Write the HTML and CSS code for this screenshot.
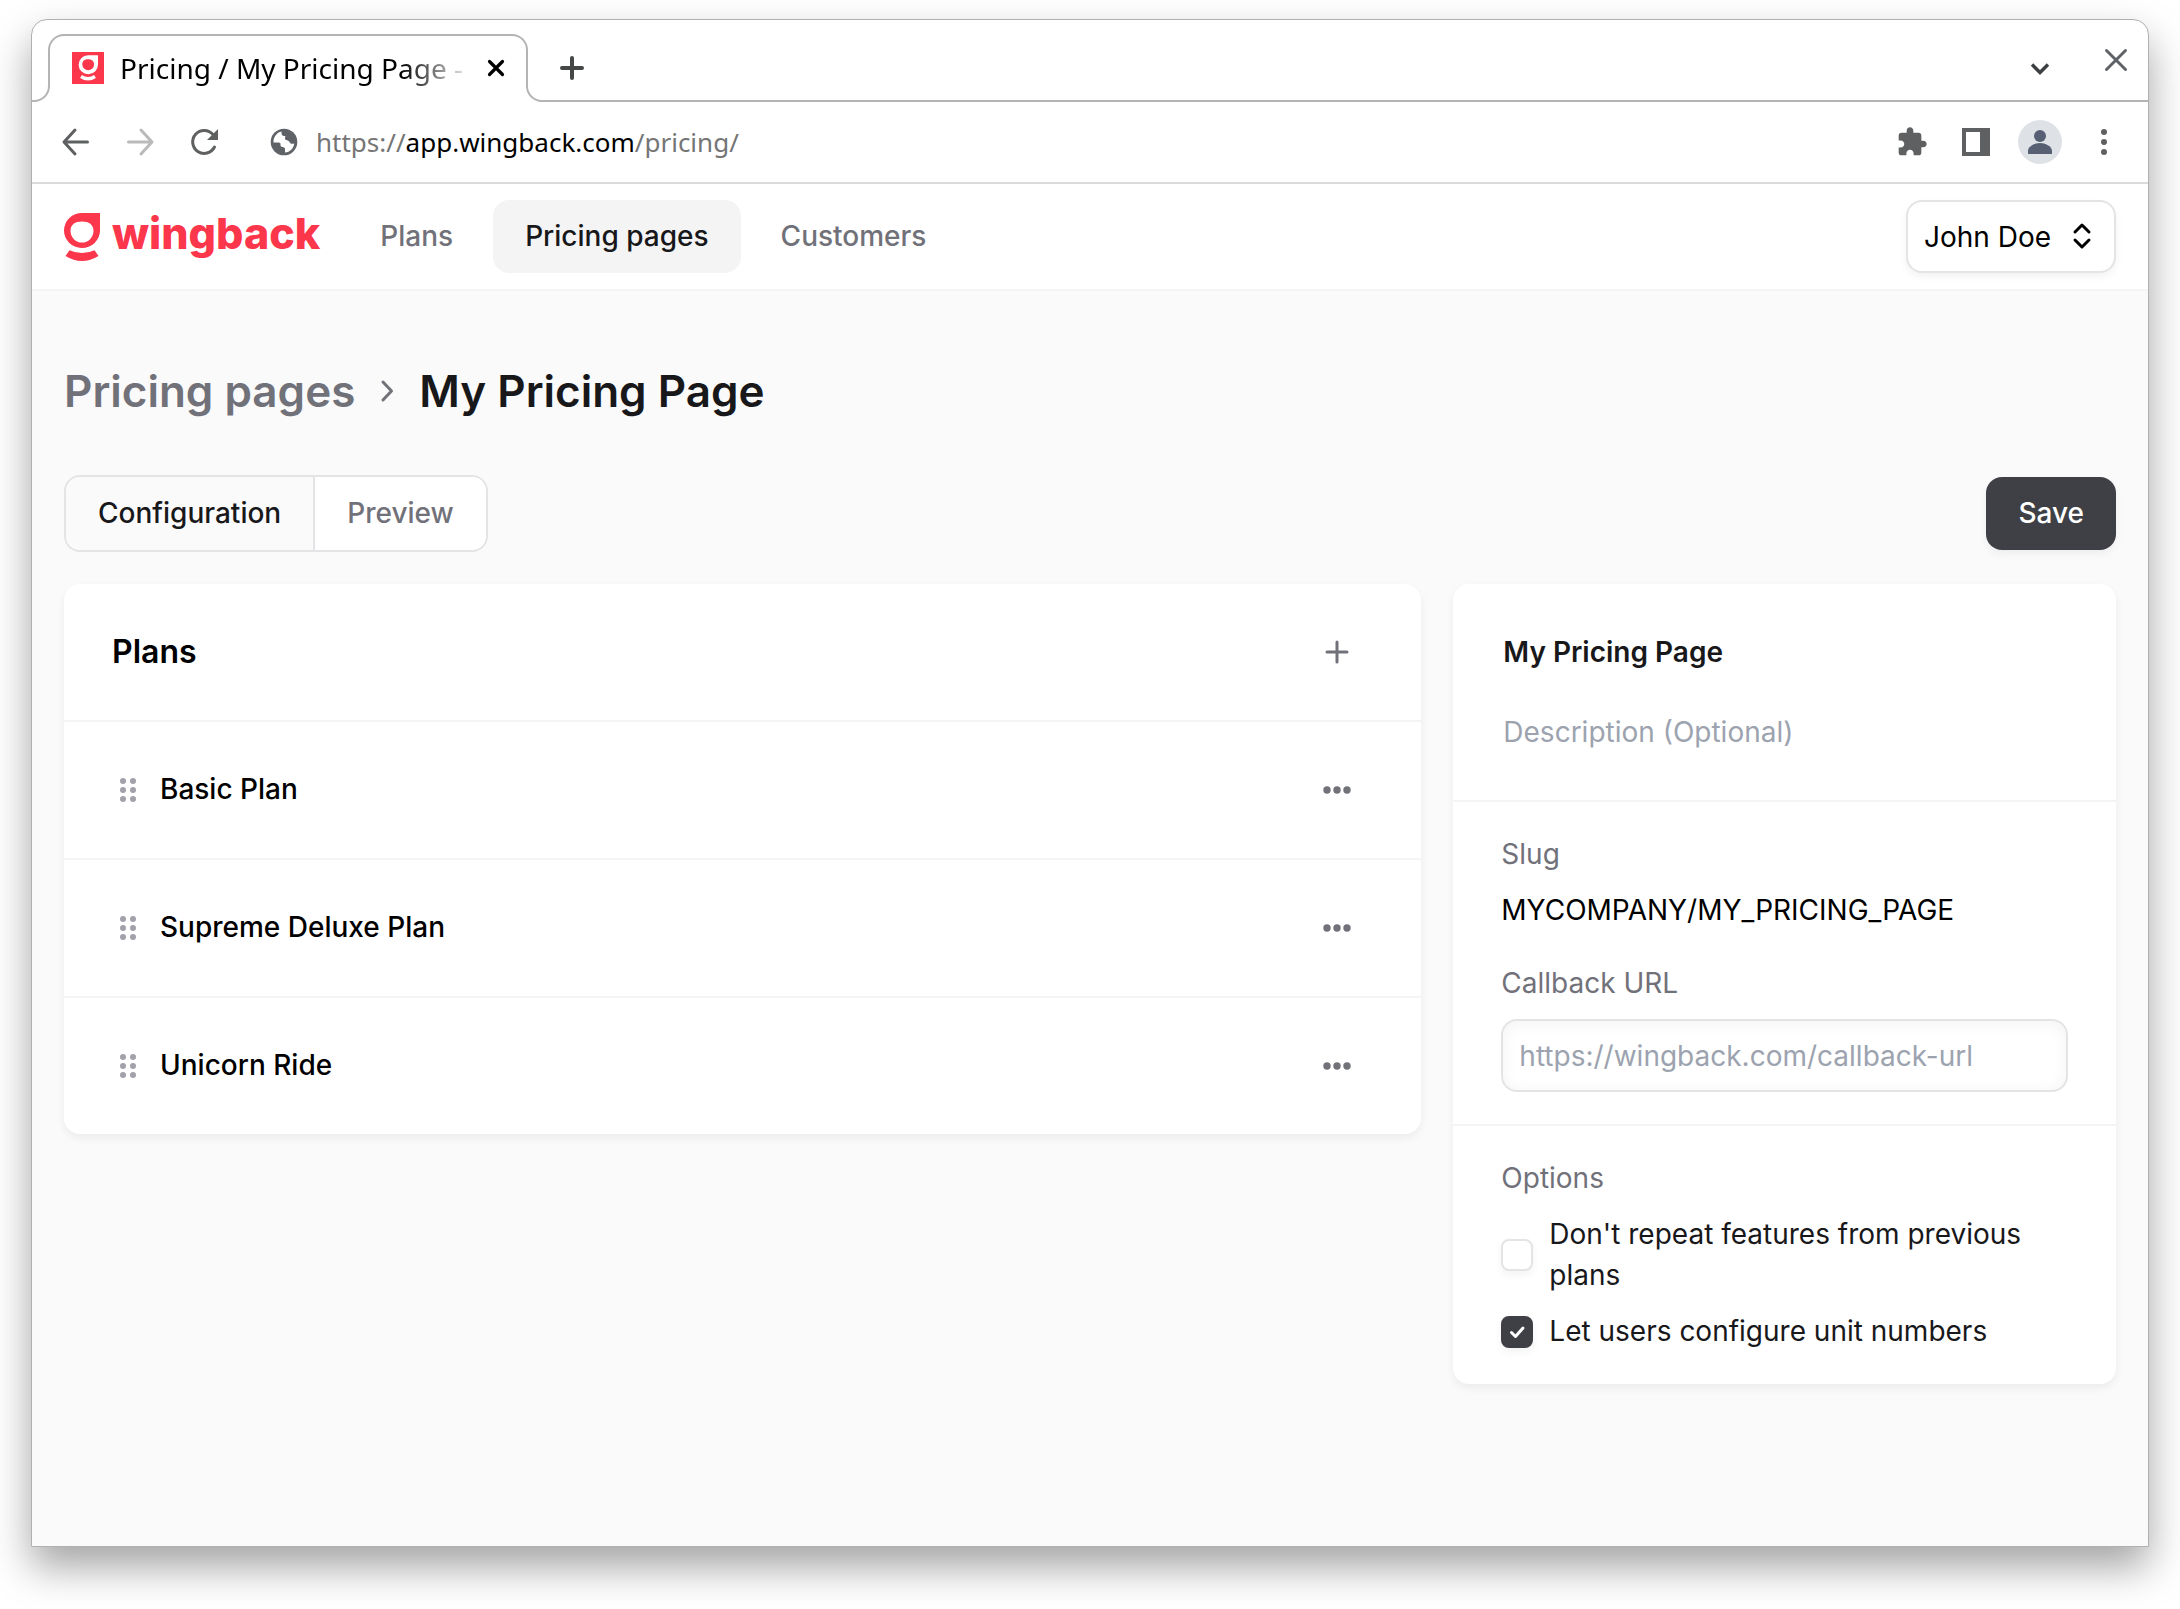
FILE: index.html
```html
<!DOCTYPE html>
<html lang="en">
<head>
    <meta charset="UTF-8">
    <meta name="viewport" content="width=device-width, initial-scale=1.0">
    <title>Pricing / My Pricing Page - Wingback</title>
    <link rel="stylesheet" href="styles.css">
</head>
<body>
    <div class="window">
        <!-- Tab strip -->
        <div class="tab-strip">
            <div class="tab-foot tab-foot-left"></div>
            <div class="browser-tab">
                <svg class="favicon" viewBox="0 0 32 32" width="32" height="32">
                    <rect width="32" height="32" fill="#fc364b"/>
                    <path fill="#fff" fill-rule="evenodd" d="M16 3.200H26V12.500A9.700 9.500 0 1 1 16 3.200ZM16 7.200C12.500 7.200 10.300 9 10.300 12.300A5.900 5.900 0 0 0 22.100 12.300C22.100 9 19.500 7.200 16 7.200Z"/>
                    <path d="M9 24.500q7 4.500 14 0" fill="none" stroke="#fff" stroke-width="3.400"/>
                </svg>
                <span class="tab-title">Pricing / My Pricing Page -</span>
                <button class="icon-button tab-close" aria-label="Close tab">
                    <svg viewBox="0 0 32 32" width="32" height="32"><path d="M9.500 9.500l13 13M22.500 9.500l-13 13" fill="none" stroke="#000" stroke-width="3.200" stroke-linecap="round"/></svg>
                </button>
            </div>
            <div class="tab-foot tab-foot-right"></div>
            <div class="tab-rest">
                <button class="icon-button" aria-label="New tab">
                    <svg viewBox="0 0 32 32" width="32" height="32"><path d="M16 6v20M6 16h20" fill="none" stroke="#444746" stroke-width="4" stroke-linecap="round"/></svg>
                </button>
                <div class="window-buttons">
                    <button class="icon-button" aria-label="Search tabs">
                        <svg viewBox="0 0 32 32" width="32" height="32"><path d="M8 12.500l8 8 8-8" fill="none" stroke="#3c4043" stroke-width="3.400"/></svg>
                    </button>
                    <button class="icon-button window-close" aria-label="Close window">
                        <svg viewBox="0 0 32 32" width="32" height="32"><path d="M6.500 6.500l19 19M25.500 6.500l-19 19" fill="none" stroke="#5f6368" stroke-width="3" stroke-linecap="round"/></svg>
                    </button>
                </div>
            </div>
        </div>

        <!-- Address bar -->
        <div class="toolbar">
            <div class="toolbar-group">
                <button class="icon-button" aria-label="Back">
                    <svg viewBox="0 0 40 40" width="40" height="40"><path d="M31.500 20H9M19 8L8 20l11 12" fill="none" stroke="#5f6061" stroke-width="3" stroke-linecap="round" stroke-linejoin="round"/></svg>
                </button>
                <button class="icon-button" aria-label="Forward">
                    <svg viewBox="0 0 40 40" width="40" height="40"><path d="M8.500 20H31M21 8l11 12-11 12" fill="none" stroke="#bababa" stroke-width="3" stroke-linecap="round" stroke-linejoin="round"/></svg>
                </button>
                <button class="icon-button" aria-label="Reload">
                    <svg viewBox="0 0 40 40" width="40" height="40">
                        <path d="M30.500 25a11.500 11.500 0 1 1-1.500-12.500" fill="none" stroke="#5f6061" stroke-width="3" stroke-linecap="round"/>
                        <path d="M34 7v11H23z" fill="#5f6061"/>
                    </svg>
                </button>
            </div>
            <div class="address">
                <svg viewBox="0 0 32 32" width="32" height="32">
                    <circle cx="16" cy="16" r="13.300" fill="#5f6368"/>
                    <path fill="#fff" d="M5.500 15C6 10 9.500 6.400 13.500 5.600C13.500 8 13.500 9.500 15.500 10H17C18 10.500 16.500 11.500 17 13C17.500 14.500 20.500 14 21.500 16C22.500 18 24 18 26.300 17.500C25.500 22.500 22 26.200 17 26.600V22.500C16.500 20.500 12.500 22 12.500 19V17.500C12 16.500 11 16.400 10 16.400H5.500Z"/>
                </svg>
                <span class="url">https://<span class="url-host">app.wingback.com</span>/pricing/</span>
            </div>
            <div class="toolbar-group">
                <button class="icon-button" aria-label="Extensions">
                    <svg viewBox="0 0 24 24" width="32" height="32"><path fill="#5f6061" d="M20.500 11H19V7c0-1.100-.9-2-2-2h-4V3.500C13 2.120 11.880 1 10.500 1S8 2.120 8 3.500V5H4c-1.100 0-1.990.9-1.990 2v3.800H3.500c1.490 0 2.700 1.210 2.700 2.700s-1.210 2.700-2.700 2.700H2V20c0 1.100.9 2 2 2h3.800v-1.500c0-1.490 1.210-2.700 2.700-2.700 1.490 0 2.700 1.210 2.700 2.700V22H17c1.100 0 2-.9 2-2v-4h1.500c1.380 0 2.500-1.120 2.500-2.500S21.880 11 20.500 11z"/></svg>
                </button>
                <button class="icon-button" aria-label="Side panel">
                    <svg viewBox="0 0 28 28" width="28" height="28"><path fill="#5f6061" fill-rule="evenodd" d="M0 0h28v28H0zM4 4v20h14V4z"/></svg>
                </button>
                <button class="icon-button" aria-label="Profile">
                    <svg viewBox="0 0 44 44" width="44" height="44">
                        <circle cx="22" cy="22" r="22" fill="#dee1e6"/>
                        <circle cx="22" cy="16" r="6" fill="#565f73"/>
                        <path d="M10 34v-3c0-5 7-8 12-8s12 3 12 8v3z" fill="#565f73"/>
                    </svg>
                </button>
                <button class="icon-button" aria-label="Menu">
                    <svg viewBox="0 0 32 32" width="32" height="32" fill="#5f6061"><circle cx="16" cy="6" r="3"/><circle cx="16" cy="16" r="3"/><circle cx="16" cy="26" r="3"/></svg>
                </button>
            </div>
        </div>

        <header class="header">
            <a class="logo" href="#">
                <svg viewBox="0 0 36 48" width="36" height="48">
                    <path fill="#fc364b" fill-rule="evenodd" d="M18 0H36V18A18 17.500 0 1 1 18 0ZM18 8.500C11 8.500 6.500 11.500 6.500 18A11.500 11.500 0 0 0 29.500 18C29.500 11.500 25 8.500 18 8.500Z"/>
                    <path fill="#fc364b" d="M5.500 37.200Q18 43 30.500 37.200L34.500 43Q18 53 1.500 43Z"/>
                </svg>
                <span class="logo-text">wingback</span>
            </a>
            <nav class="nav">
                <a class="nav-link" href="#">Plans</a>
                <a class="nav-link active" href="#">Pricing pages</a>
                <a class="nav-link" href="#">Customers</a>
            </nav>
            <div class="user-menu">
                <select class="user-select" aria-label="Account">
                    <option>John Doe</option>
                </select>
                <svg class="user-arrows" viewBox="0 0 24 32" width="24" height="32"><path d="M5 12l7-7 7 7M5 20l7 7 7-7" fill="none" stroke="#000" stroke-width="3" stroke-linecap="round" stroke-linejoin="round"/></svg>
            </div>
        </header>

        <main class="main">
            <h1 class="breadcrumb">
                <a class="breadcrumb-link" href="#">Pricing pages</a>
                <svg viewBox="0 0 32 32" width="32" height="32"><path d="M12 7l8.500 9L12 25" fill="none" stroke="#71717a" stroke-width="3" stroke-linecap="round" stroke-linejoin="round"/></svg>
                <span>My Pricing Page</span>
            </h1>

            <div class="actions">
                <div class="view-tabs">
                    <button class="view-tab active">Configuration</button>
                    <button class="view-tab">Preview</button>
                </div>
                <button class="save-button">Save</button>
            </div>

            <div class="columns">
                <section class="card plans">
                    <div class="plan-row">
                        <h2 class="plans-title">Plans</h2>
                        <button class="icon-button" aria-label="Add plan">
                            <svg viewBox="0 0 32 32" width="32" height="32"><path d="M16 6v20M6 16h20" fill="none" stroke="#71717a" stroke-width="3" stroke-linecap="round"/></svg>
                        </button>
                    </div>
                    <div class="plan-row">
                        <svg class="drag" viewBox="0 0 32 32" width="32" height="32" fill="#a1a1aa"><circle cx="11" cy="7" r="3"/><circle cx="21" cy="7" r="3"/><circle cx="11" cy="16" r="3"/><circle cx="21" cy="16" r="3"/><circle cx="11" cy="25" r="3"/><circle cx="21" cy="25" r="3"/></svg>
                        <span class="plan-name">Basic Plan</span>
                        <button class="icon-button" aria-label="Basic Plan options">
                            <svg viewBox="0 0 32 32" width="32" height="32" fill="#71717a"><circle cx="6" cy="16" r="3.700"/><circle cx="16" cy="16" r="3.700"/><circle cx="26" cy="16" r="3.700"/></svg>
                        </button>
                    </div>
                    <div class="plan-row">
                        <svg class="drag" viewBox="0 0 32 32" width="32" height="32" fill="#a1a1aa"><circle cx="11" cy="7" r="3"/><circle cx="21" cy="7" r="3"/><circle cx="11" cy="16" r="3"/><circle cx="21" cy="16" r="3"/><circle cx="11" cy="25" r="3"/><circle cx="21" cy="25" r="3"/></svg>
                        <span class="plan-name">Supreme Deluxe Plan</span>
                        <button class="icon-button" aria-label="Supreme Deluxe Plan options">
                            <svg viewBox="0 0 32 32" width="32" height="32" fill="#71717a"><circle cx="6" cy="16" r="3.700"/><circle cx="16" cy="16" r="3.700"/><circle cx="26" cy="16" r="3.700"/></svg>
                        </button>
                    </div>
                    <div class="plan-row">
                        <svg class="drag" viewBox="0 0 32 32" width="32" height="32" fill="#a1a1aa"><circle cx="11" cy="7" r="3"/><circle cx="21" cy="7" r="3"/><circle cx="11" cy="16" r="3"/><circle cx="21" cy="16" r="3"/><circle cx="11" cy="25" r="3"/><circle cx="21" cy="25" r="3"/></svg>
                        <span class="plan-name">Unicorn Ride</span>
                        <button class="icon-button" aria-label="Unicorn Ride options">
                            <svg viewBox="0 0 32 32" width="32" height="32" fill="#71717a"><circle cx="6" cy="16" r="3.700"/><circle cx="16" cy="16" r="3.700"/><circle cx="26" cy="16" r="3.700"/></svg>
                        </button>
                    </div>
                </section>

                <form class="card settings">
                    <div class="section names">
                        <input class="plain-input name-input" type="text" aria-label="Name" value="My Pricing Page">
                        <input class="plain-input" type="text" aria-label="Description" placeholder="Description (Optional)">
                    </div>
                    <div class="section">
                        <div class="field">
                            <span class="label">Slug</span>
                            <span class="slug">MYCOMPANY/MY_PRICING_PAGE</span>
                        </div>
                        <div class="field">
                            <label class="label" for="callback">Callback URL</label>
                            <input class="text-input" type="url" id="callback" placeholder="https://wingback.com/callback-url">
                        </div>
                    </div>
                    <div class="section">
                        <div class="field">
                            <span class="label">Options</span>
                            <label class="option">
                                <input class="checkbox" type="checkbox">
                                <span>Don't repeat features from previous plans</span>
                            </label>
                            <label class="option">
                                <input class="checkbox" type="checkbox" checked>
                                <span>Let users configure unit numbers</span>
                            </label>
                        </div>
                    </div>
                </form>
            </div>
        </main>
    </div>
</body>
</html>
```
FILE: styles.css
```css
* {
    box-sizing: border-box;
}
body {
    margin: 0;
    min-height: 100vh;
    padding: 19px 31px 62px;
    display: flex;
    background-color: #fff;
    font-family: Inter, sans-serif;
    font-size: 28px;
    line-height: 41px;
    color: #18181b;
}
button, input, select {
    font: inherit;
    color: inherit;
}
button {
    cursor: pointer;
}
a {
    text-decoration: none;
}
svg {
    display: block;
    flex-shrink: 0;
}
.window {
    flex: 1;
    display: flex;
    flex-direction: column;
    overflow: hidden;
    background-color: #fff;
    border: 1px solid #b0b0b0;
    border-radius: 16px 16px 0 0;
    box-shadow: 0 20px 40px rgba(0, 0, 0, 0.36);
}
.icon-button {
    display: flex;
    align-items: center;
    justify-content: center;
    width: 32px;
    height: 32px;
    padding: 0;
    border: none;
    background: none;
}

/* Browser chrome */
.tab-strip {
    display: flex;
    height: 82px;
    font-family: "Noto Sans", sans-serif;
    color: #000;
}
.tab-foot {
    align-self: flex-end;
    width: 18px;
    height: 18px;
    border-bottom: 2px solid #b4b4b4;
}
.tab-foot-left {
    margin-right: -2px;
    border-right: 2px solid #b4b4b4;
    border-bottom-right-radius: 16px;
}
.tab-foot-right {
    margin-left: -2px;
    border-left: 2px solid #b4b4b4;
    border-bottom-left-radius: 16px;
}
.browser-tab {
    display: flex;
    width: 480px;
    height: 50px;
    margin-top: 14px;
    padding: 16px 14px 0 22px;
    border: 2px solid #b4b4b4;
    border-bottom: none;
    border-radius: 16px 16px 0 0;
}
.tab-title {
    flex: 1;
    height: 40px;
    margin: 0 0 0 16px;
    line-height: 32px;
    white-space: nowrap;
    -webkit-mask-image: linear-gradient(to right, #000 78%, transparent 98%);
    mask-image: linear-gradient(to right, #000 78%, transparent 98%);
}
.tab-rest {
    flex: 1;
    display: flex;
    align-items: flex-start;
    justify-content: space-between;
    padding: 32px 16px 0 12px;
    border-bottom: 2px solid #b4b4b4;
}
.window-buttons {
    display: flex;
    gap: 44px;
}
.window-close {
    margin-top: -8px;
}
.toolbar {
    display: flex;
    align-items: center;
    height: 82px;
    padding: 0 28px;
    border-bottom: 2px solid #dadada;
}
.toolbar-group {
    display: flex;
    gap: 32px;
}
.address {
    flex: 1;
    display: flex;
    align-items: center;
    gap: 16px;
    margin: 0 48px;
}
.url {
    font-family: "Noto Sans", sans-serif;
    font-size: 26px;
    color: #757575;
}
.url-host {
    color: #000;
}

/* App header */
.header {
    display: flex;
    align-items: center;
    padding: 16px 32px;
    border-bottom: 2px solid #f4f4f5;
}
.logo {
    display: flex;
    align-items: flex-start;
    gap: 12px;
    margin-right: 28px;
}
.logo-text {
    font-size: 43px;
    font-weight: 800;
    color: #fc364b;
}
.nav {
    flex: 1;
    display: flex;
    gap: 8px;
}
.nav-link {
    padding: 16px 32px;
    border-radius: 16px;
    font-weight: 500;
    color: #71717a;
}
.nav-link.active {
    background-color: #f4f4f5;
    color: #18181b;
}
.user-menu {
    position: relative;
}
.user-select {
    display: block;
    appearance: none;
    height: 73px;
    padding: 2px 62px 0 16px;
    border: 2px solid #e4e4e7;
    border-radius: 16px;
    background-color: #fff;
    box-shadow: 0 4px 8px rgba(0, 0, 0, 0.05);
    color: #000;
}
.user-arrows {
    position: absolute;
    top: 20px;
    right: 22px;
    pointer-events: none;
}

/* Page */
.main {
    flex: 1;
    padding: 70px 32px 32px;
    background-color: #fafafa;
}
.breadcrumb {
    display: flex;
    align-items: center;
    gap: 16px;
    margin: 0 0 54px;
    font-size: 44px;
    line-height: 60px;
    font-weight: 600;
}
.breadcrumb-link {
    color: #71717a;
}
.actions {
    display: flex;
    align-items: center;
    justify-content: space-between;
    margin-bottom: 32px;
}
.view-tabs {
    display: flex;
    border: 2px solid #e4e4e7;
    border-radius: 16px;
    overflow: hidden;
}
.view-tab {
    padding: 16px 32px;
    border: none;
    background-color: #fff;
    font-weight: 500;
    color: #71717a;
}
.view-tab.active {
    border-right: 2px solid #e4e4e7;
    background-color: #fafafa;
    color: #18181b;
}
.save-button {
    height: 73px;
    padding: 0 32px;
    border: none;
    border-radius: 16px;
    background-color: #3f3f46;
    box-shadow: 0 4px 8px rgba(0, 0, 0, 0.05);
    font-weight: 500;
    color: #fff;
}
.columns {
    display: grid;
    grid-template-columns: repeat(3, 1fr);
    align-items: start;
    gap: 32px;
}
.card {
    border-radius: 16px;
    background-color: #fff;
    box-shadow: 0 4px 8px rgba(0, 0, 0, 0.06);
}
.plans {
    grid-column: span 2;
    color: #000;
}
.plan-row {
    display: flex;
    align-items: center;
    justify-content: space-between;
    padding: 47px 68px 48px 48px;
}
.plan-row + .plan-row,
.section + .section {
    border-top: 2px solid #f4f4f5;
}
.plans-title {
    margin: 0;
    font-size: 32px;
    font-weight: 600;
}
.plan-name {
    flex: 1;
    margin-left: 16px;
    font-weight: 500;
}

/* Settings */
.section {
    display: flex;
    flex-direction: column;
    gap: 32px;
    padding: 32px 48px;
}
.names {
    gap: 8px;
}
.field {
    display: flex;
    flex-direction: column;
    gap: 15px;
}
.plain-input {
    width: 100%;
    height: 72px;
    padding: 0;
    border: 2px solid transparent;
    background: none;
}
.name-input {
    font-weight: 600;
}
.label {
    color: #71717a;
}
.slug {
    color: #000;
}
.text-input {
    width: 100%;
    height: 73px;
    padding: 0 16px;
    border: 2px solid #e4e4e7;
    border-radius: 16px;
    background-color: #fff;
    box-shadow: inset 0 2px 16px rgba(0, 0, 0, 0.05);
}
input::placeholder {
    color: #9ca3af;
    opacity: 1;
}
.option {
    display: flex;
    align-items: center;
    gap: 16px;
}
.checkbox {
    appearance: none;
    flex-shrink: 0;
    width: 32px;
    height: 32px;
    margin: 0;
    border: 2px solid #e4e4e7;
    border-radius: 8px;
    background-color: #fff;
    box-shadow: 0 4px 8px rgba(0, 0, 0, 0.05);
}
.checkbox:checked {
    border-color: #3f3f46;
    background: #3f3f46 url("data:image/svg+xml,%3Csvg xmlns='http://www.w3.org/2000/svg' viewBox='0 0 28 28'%3E%3Cpath d='M8.500 14.500l4 4 7.500-8.500' fill='none' stroke='%23fff' stroke-width='3' stroke-linecap='round' stroke-linejoin='round'/%3E%3C/svg%3E") center / 28px no-repeat;
}
```
